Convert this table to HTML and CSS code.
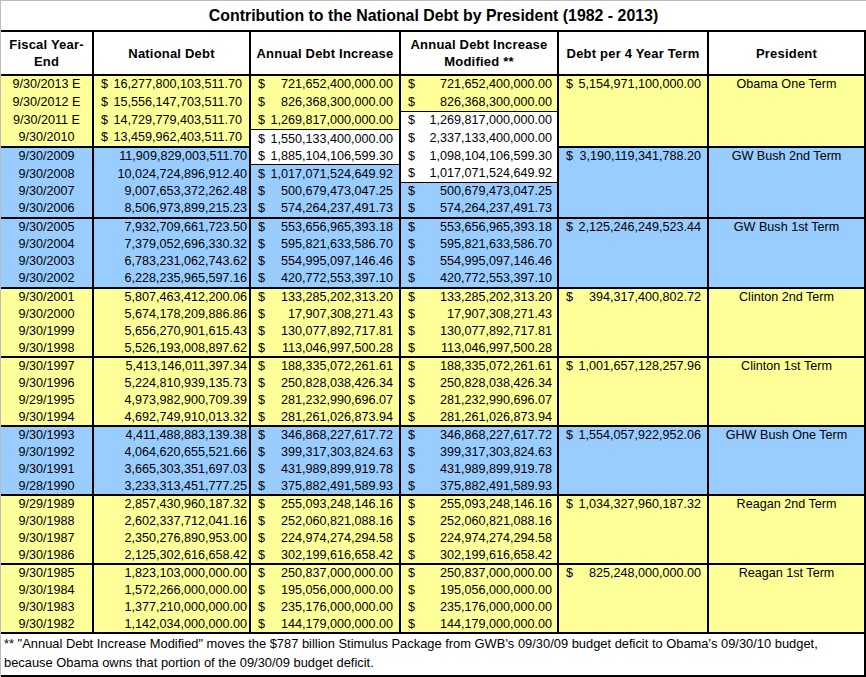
FILE: index.html
```html
<!DOCTYPE html>
<html>
<head>
<meta charset="utf-8">
<link rel="stylesheet" href="styles.css">
</head>
<body>
<div class="sheet">
  <div class="title">Contribution to the National Debt by President (1982 - 2013)</div>
  <div class="grid">
    <div class="c h">Fiscal Year-<br>End</div>
    <div class="c h">National Debt</div>
    <div class="c h">Annual Debt Increase</div>
    <div class="c h">Annual Debt Increase<br>Modified **</div>
    <div class="c h">Debt per 4 Year Term</div>
    <div class="c h">President</div>

    <!-- Obama -->
    <div class="c d y">9/30/2013 E</div>
    <div class="c n2 m y"><span>$</span><span>16,277,800,103,511.70</span></div>
    <div class="c n3 m y"><span>$</span><span>721,652,400,000.00</span></div>
    <div class="c n4 m y"><span>$</span><span>721,652,400,000.00</span></div>
    <div class="c tot y gb"><span>$</span><span>5,154,971,100,000.00</span></div>
    <div class="c pr y gb">Obama One Term</div>
    <div class="c d y">9/30/2012 E</div>
    <div class="c n2 m y"><span>$</span><span>15,556,147,703,511.70</span></div>
    <div class="c n3 m y"><span>$</span><span>826,368,300,000.00</span></div>
    <div class="c n4 m y"><span>$</span><span>826,368,300,000.00</span></div>
    <div class="c d y">9/30/2011 E</div>
    <div class="c n2 m y"><span>$</span><span>14,729,779,403,511.70</span></div>
    <div class="c n3 m y"><span>$</span><span>1,269,817,000,000.00</span></div>
    <div class="c n4 m w tt"><span>$</span><span>1,269,817,000,000.00</span></div>
    <div class="c d y gb">9/30/2010</div>
    <div class="c n2 m y gb"><span>$</span><span>13,459,962,403,511.70</span></div>
    <div class="c n3 m w tt"><span>$</span><span>1,550,133,400,000.00</span></div>
    <div class="c n4 m w"><span>$</span><span>2,337,133,400,000.00</span></div>

    <!-- GW Bush 2nd -->
    <div class="c d b">9/30/2009</div>
    <div class="c n2 r b">11,909,829,003,511.70</div>
    <div class="c n3 m w tb"><span>$</span><span>1,885,104,106,599.30</span></div>
    <div class="c n4 m w"><span>$</span><span>1,098,104,106,599.30</span></div>
    <div class="c tot b gb"><span>$</span><span>3,190,119,341,788.20</span></div>
    <div class="c pr b gb">GW Bush 2nd Term</div>
    <div class="c d b">9/30/2008</div>
    <div class="c n2 r b">10,024,724,896,912.40</div>
    <div class="c n3 m b"><span>$</span><span>1,017,071,524,649.92</span></div>
    <div class="c n4 m w tb"><span>$</span><span>1,017,071,524,649.92</span></div>
    <div class="c d b">9/30/2007</div>
    <div class="c n2 r b">9,007,653,372,262.48</div>
    <div class="c n3 m b"><span>$</span><span>500,679,473,047.25</span></div>
    <div class="c n4 m b"><span>$</span><span>500,679,473,047.25</span></div>
    <div class="c d b gb">9/30/2006</div>
    <div class="c n2 r b gb">8,506,973,899,215.23</div>
    <div class="c n3 m b gb"><span>$</span><span>574,264,237,491.73</span></div>
    <div class="c n4 m b gb"><span>$</span><span>574,264,237,491.73</span></div>

    <!-- GW Bush 1st -->
    <div class="c d b">9/30/2005</div>
    <div class="c n2 r b">7,932,709,661,723.50</div>
    <div class="c n3 m b"><span>$</span><span>553,656,965,393.18</span></div>
    <div class="c n4 m b"><span>$</span><span>553,656,965,393.18</span></div>
    <div class="c tot b gb"><span>$</span><span>2,125,246,249,523.44</span></div>
    <div class="c pr b gb">GW Bush 1st Term</div>
    <div class="c d b">9/30/2004</div>
    <div class="c n2 r b">7,379,052,696,330.32</div>
    <div class="c n3 m b"><span>$</span><span>595,821,633,586.70</span></div>
    <div class="c n4 m b"><span>$</span><span>595,821,633,586.70</span></div>
    <div class="c d b">9/30/2003</div>
    <div class="c n2 r b">6,783,231,062,743.62</div>
    <div class="c n3 m b"><span>$</span><span>554,995,097,146.46</span></div>
    <div class="c n4 m b"><span>$</span><span>554,995,097,146.46</span></div>
    <div class="c d b gb">9/30/2002</div>
    <div class="c n2 r b gb">6,228,235,965,597.16</div>
    <div class="c n3 m b gb"><span>$</span><span>420,772,553,397.10</span></div>
    <div class="c n4 m b gb"><span>$</span><span>420,772,553,397.10</span></div>

    <!-- Clinton 2nd -->
    <div class="c d y">9/30/2001</div>
    <div class="c n2 r y">5,807,463,412,200.06</div>
    <div class="c n3 m y"><span>$</span><span>133,285,202,313.20</span></div>
    <div class="c n4 m y"><span>$</span><span>133,285,202,313.20</span></div>
    <div class="c tot y gb"><span>$</span><span>394,317,400,802.72</span></div>
    <div class="c pr y gb">Clinton 2nd Term</div>
    <div class="c d y">9/30/2000</div>
    <div class="c n2 r y">5,674,178,209,886.86</div>
    <div class="c n3 m y"><span>$</span><span>17,907,308,271.43</span></div>
    <div class="c n4 m y"><span>$</span><span>17,907,308,271.43</span></div>
    <div class="c d y">9/30/1999</div>
    <div class="c n2 r y">5,656,270,901,615.43</div>
    <div class="c n3 m y"><span>$</span><span>130,077,892,717.81</span></div>
    <div class="c n4 m y"><span>$</span><span>130,077,892,717.81</span></div>
    <div class="c d y gb">9/30/1998</div>
    <div class="c n2 r y gb">5,526,193,008,897.62</div>
    <div class="c n3 m y gb"><span>$</span><span>113,046,997,500.28</span></div>
    <div class="c n4 m y gb"><span>$</span><span>113,046,997,500.28</span></div>

    <!-- Clinton 1st -->
    <div class="c d y">9/30/1997</div>
    <div class="c n2 r y">5,413,146,011,397.34</div>
    <div class="c n3 m y"><span>$</span><span>188,335,072,261.61</span></div>
    <div class="c n4 m y"><span>$</span><span>188,335,072,261.61</span></div>
    <div class="c tot y gb"><span>$</span><span>1,001,657,128,257.96</span></div>
    <div class="c pr y gb">Clinton 1st Term</div>
    <div class="c d y">9/30/1996</div>
    <div class="c n2 r y">5,224,810,939,135.73</div>
    <div class="c n3 m y"><span>$</span><span>250,828,038,426.34</span></div>
    <div class="c n4 m y"><span>$</span><span>250,828,038,426.34</span></div>
    <div class="c d y">9/29/1995</div>
    <div class="c n2 r y">4,973,982,900,709.39</div>
    <div class="c n3 m y"><span>$</span><span>281,232,990,696.07</span></div>
    <div class="c n4 m y"><span>$</span><span>281,232,990,696.07</span></div>
    <div class="c d y gb">9/30/1994</div>
    <div class="c n2 r y gb">4,692,749,910,013.32</div>
    <div class="c n3 m y gb"><span>$</span><span>281,261,026,873.94</span></div>
    <div class="c n4 m y gb"><span>$</span><span>281,261,026,873.94</span></div>

    <!-- GHW Bush -->
    <div class="c d b">9/30/1993</div>
    <div class="c n2 r b">4,411,488,883,139.38</div>
    <div class="c n3 m b"><span>$</span><span>346,868,227,617.72</span></div>
    <div class="c n4 m b"><span>$</span><span>346,868,227,617.72</span></div>
    <div class="c tot b gb"><span>$</span><span>1,554,057,922,952.06</span></div>
    <div class="c pr b gb">GHW Bush One Term</div>
    <div class="c d b">9/30/1992</div>
    <div class="c n2 r b">4,064,620,655,521.66</div>
    <div class="c n3 m b"><span>$</span><span>399,317,303,824.63</span></div>
    <div class="c n4 m b"><span>$</span><span>399,317,303,824.63</span></div>
    <div class="c d b">9/30/1991</div>
    <div class="c n2 r b">3,665,303,351,697.03</div>
    <div class="c n3 m b"><span>$</span><span>431,989,899,919.78</span></div>
    <div class="c n4 m b"><span>$</span><span>431,989,899,919.78</span></div>
    <div class="c d b gb">9/28/1990</div>
    <div class="c n2 r b gb">3,233,313,451,777.25</div>
    <div class="c n3 m b gb"><span>$</span><span>375,882,491,589.93</span></div>
    <div class="c n4 m b gb"><span>$</span><span>375,882,491,589.93</span></div>

    <!-- Reagan 2nd -->
    <div class="c d y">9/29/1989</div>
    <div class="c n2 r y">2,857,430,960,187.32</div>
    <div class="c n3 m y"><span>$</span><span>255,093,248,146.16</span></div>
    <div class="c n4 m y"><span>$</span><span>255,093,248,146.16</span></div>
    <div class="c tot y gb"><span>$</span><span>1,034,327,960,187.32</span></div>
    <div class="c pr y gb">Reagan 2nd Term</div>
    <div class="c d y">9/30/1988</div>
    <div class="c n2 r y">2,602,337,712,041.16</div>
    <div class="c n3 m y"><span>$</span><span>252,060,821,088.16</span></div>
    <div class="c n4 m y"><span>$</span><span>252,060,821,088.16</span></div>
    <div class="c d y">9/30/1987</div>
    <div class="c n2 r y">2,350,276,890,953.00</div>
    <div class="c n3 m y"><span>$</span><span>224,974,274,294.58</span></div>
    <div class="c n4 m y"><span>$</span><span>224,974,274,294.58</span></div>
    <div class="c d y gb">9/30/1986</div>
    <div class="c n2 r y gb">2,125,302,616,658.42</div>
    <div class="c n3 m y gb"><span>$</span><span>302,199,616,658.42</span></div>
    <div class="c n4 m y gb"><span>$</span><span>302,199,616,658.42</span></div>

    <!-- Reagan 1st -->
    <div class="c d y">9/30/1985</div>
    <div class="c n2 r y">1,823,103,000,000.00</div>
    <div class="c n3 m y"><span>$</span><span>250,837,000,000.00</span></div>
    <div class="c n4 m y"><span>$</span><span>250,837,000,000.00</span></div>
    <div class="c tot y gb"><span>$</span><span>825,248,000,000.00</span></div>
    <div class="c pr y gb">Reagan 1st Term</div>
    <div class="c d y">9/30/1984</div>
    <div class="c n2 r y">1,572,266,000,000.00</div>
    <div class="c n3 m y"><span>$</span><span>195,056,000,000.00</span></div>
    <div class="c n4 m y"><span>$</span><span>195,056,000,000.00</span></div>
    <div class="c d y">9/30/1983</div>
    <div class="c n2 r y">1,377,210,000,000.00</div>
    <div class="c n3 m y"><span>$</span><span>235,176,000,000.00</span></div>
    <div class="c n4 m y"><span>$</span><span>235,176,000,000.00</span></div>
    <div class="c d y gb">9/30/1982</div>
    <div class="c n2 r y gb">1,142,034,000,000.00</div>
    <div class="c n3 m y gb"><span>$</span><span>144,179,000,000.00</span></div>
    <div class="c n4 m y gb"><span>$</span><span>144,179,000,000.00</span></div>

    <div class="note">** "Annual Debt Increase Modified" moves the $787 billion Stimulus Package from GWB's 09/30/09 budget deficit to Obama's 09/30/10 budget,<br>because Obama owns that portion of the 09/30/09 budget deficit.</div>
  </div>
</div>
</body>
</html>
```

FILE: styles.css
```css
* {
  box-sizing: border-box;
}

body {
  margin: 0;
  background: #ffffff;
  color: #000000;
  font-family: "Liberation Sans", Arial, sans-serif;
}

.sheet {
  width: 866px;
  height: 677px;
  border-top: 1px solid #bdbdbd;
  border-left: 1px solid #bdbdbd;
  overflow: hidden;
}

.title {
  height: 31px;
  border-bottom: 2px solid #000;
  text-align: center;
  font-weight: bold;
  font-size: 15.9px;
  line-height: 29px;
}

.grid {
  display: grid;
  grid-template-columns: 93px 157px 150px 158px 150px 157px;
  grid-template-rows:
    44px
    17px 18px 18px 19px
    17px 18px 17px 19px
    17px 17px 17px 19px
    17px 17px 17px 18px
    17px 17px 17px 18px
    17px 17px 17px 18px
    17px 17px 17px 18px
    17px 17px 17px 18px
    43px;
}

.c {
  border-right: 2px solid #000;
  display: flex;
  align-items: center;
  font-size: 12.6px;
  line-height: 15px;
  white-space: nowrap;
}

.h {
  border-bottom: 2px solid #000;
  justify-content: center;
  text-align: center;
  font-weight: bold;
  font-size: 13px;
  letter-spacing: 0.2px;
  line-height: 17px;
  background: #ffffff;
}

.d {
  justify-content: center;
}

.m {
  justify-content: space-between;
}

.r {
  justify-content: flex-end;
}

.n2 {
  padding: 0 7px;
}

.n2.r {
  padding-right: 2px;
}

.n3 {
  padding: 0 6px 0 7px;
}

.n4 {
  padding: 0 5px 0 7px;
}

.tot {
  grid-row: span 4;
  align-items: flex-start;
  justify-content: space-between;
  padding: 1px 6px 0 7px;
}

.pr {
  grid-row: span 4;
  align-items: flex-start;
  justify-content: center;
  padding-top: 1px;
}

.y {
  background: #ffff99;
}

.b {
  background: #99ccff;
}

.w {
  background: #ffffff;
}

.gb {
  border-bottom: 2px solid #000;
}

.tt {
  border-top: 1px solid #000;
}

.tb {
  border-bottom: 1px solid #000;
}

.note {
  grid-column: 1 / -1;
  border-right: 2px solid #000;
  border-bottom: 2px solid #000;
  padding: 0 3px;
  font-size: 12.9px;
  line-height: 19px;
  background: #ffffff;
}
```
